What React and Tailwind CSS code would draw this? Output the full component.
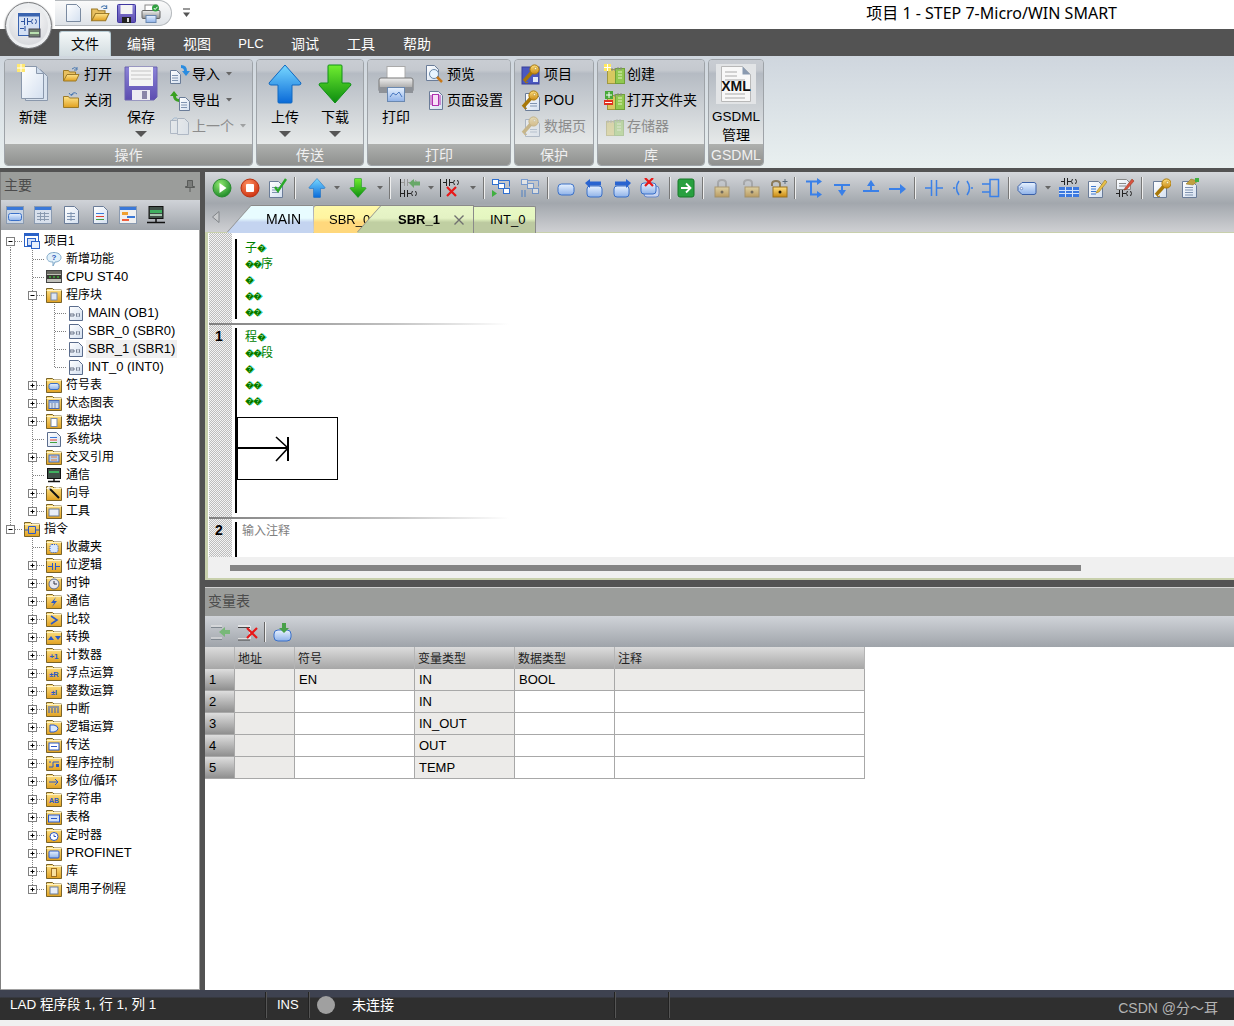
const sans = "font-['Liberation_Sans','Noto_Sans_CJK_SC',sans-serif]";

function S({ w = 20, h = 20, children, className = "" }) {
  return (
    <svg width={w} height={h} viewBox={`0 0 ${w} ${h}`} className={"block shrink-0 " + className}>
      {children}
    </svg>
  );
}

function Defs() {
  const g = (id, a, b, x2 = 0, y2 = 1) => (
    <linearGradient id={id} x1="0" y1="0" x2={x2} y2={y2}>
      <stop offset="0" stopColor={a} />
      <stop offset="1" stopColor={b} />
    </linearGradient>
  );
  return (
    <svg width="0" height="0" className="block h-0 w-0">
      <defs>
        {g("fold", "#ffe48a", "#e0a020")}
        {g("blue", "#78d8ff", "#0a6ad8")}
        {g("green", "#70ee30", "#0c8c10")}
        {g("page", "#ffffff", "#d4e0f0", 1, 1)}
        {g("purple", "#8c84d8", "#5c4cb0")}
        {g("gold", "#ffe080", "#c88810")}
        {g("gray", "#f0f0f0", "#8c8c8c")}
        {g("win", "#ffffff", "#b8cce8")}
        {g("glass", "#e8f2ff", "#8fb2e8")}
        <radialGradient id="rg" cx="0.4" cy="0.3" r="0.8">
          <stop offset="0" stopColor="#90e870" />
          <stop offset="1" stopColor="#108020" />
        </radialGradient>
        <radialGradient id="rr" cx="0.4" cy="0.3" r="0.8">
          <stop offset="0" stopColor="#ff9060" />
          <stop offset="1" stopColor="#c82808" />
        </radialGradient>
      </defs>
    </svg>
  );
}

const Doc = ({ x = 3, y = 1, w = 12, h = 16, c = "#6a7c98" }) => (
  <path d={`M${x + .5} ${y + .5}h${w - 4}l4 4v${h - 4}h-${w}z`} fill="url(#page)" stroke={c} />
);
const Lines = ({ x = 6, y = 7, n = 3, w = 6, c = "#7f93b0" }) => (
  <path d={Array.from({ length: n }, (_, i) => `M${x} ${y + i * 2.5 + .5}h${w}`).join("")} stroke={c} />
);
const Rung = ({ x = 0, y = 0, c = "#222" }) => (
  <g transform={`translate(${x} ${y})`} fill="none" stroke={c}>
    <path d="M0 3.5h3M3.5 0v7M6.5 0v7M7 3.5h3M11.5 1q-2 2.5 0 5M14.5 1q2 2.5 0 5" />
  </g>
);
const RedX = ({ x = 10, y = 9, s = 8 }) => (
  <path d={`M${x} ${y}l${s} ${s}M${x + s} ${y}l-${s} ${s}`} stroke="#e81818" strokeWidth="2.2" />
);
const Key = ({ x = 0, y = 0, sc = 1 }) => (
  <g transform={`translate(${x} ${y}) scale(${sc})`}>
    <path d="M2 17l8-9" stroke="#a87808" strokeWidth="3.5" />
    <path d="M3 17l1 2 2-1" stroke="#a87808" fill="none" />
    <circle cx="12.5" cy="5.5" r="4.6" fill="url(#gold)" stroke="#a87808" />
    <circle cx="13.5" cy="4.5" r="1.2" fill="#fff6d0" stroke="#a87808" strokeWidth=".5" />
  </g>
);
const Book = ({ x = 0, y = 0 }) => (
  <g transform={`translate(${x} ${y})`}>
    <rect x=".5" y="3.5" width="9" height="14" fill="#d8c860" stroke="#a09840" />
    <rect x="8.5" y="2.5" width="9" height="15" fill="#90c850" stroke="#70a038" />
    <path d="M11 6h4M11 9h4M11 12h4" stroke="#e4f2c0" />
    <path d="M2 2v3M5 2v3M8 2v3M11 1v3M14 1v3" stroke="#888" />
  </g>
);
const ArrowUp = ({ w = 34, h = 40 }) => (
  <S w={w} h={h}>
    <svg width={w} height={h} viewBox="0 0 34 40">
      <path d="M17 1L33 19Q33 21 31 21H24V38Q24 39 23 39H11Q10 39 10 38V21H3Q1 21 1 19Z" fill="url(#blue)" stroke="#1068c0" />
    </svg>
  </S>
);
const ArrowDown = ({ w = 34, h = 40 }) => (
  <S w={w} h={h}>
    <svg width={w} height={h} viewBox="0 0 34 40">
      <path d="M17 39L33 21Q33 19 31 19H24V2Q24 1 23 1H11Q10 1 10 2V19H3Q1 19 1 21Z" fill="url(#green)" stroke="#109018" />
    </svg>
  </S>
);
const Printer = ({ w = 36, h = 38 }) => (
  <S w={w} h={h}>
    <svg width={w} height={h} viewBox="0 0 36 38">
      <rect x="9" y="1.5" width="18" height="14" fill="#fff" stroke="#aaa" />
      <rect x="1" y="13" width="34" height="14" rx="2" fill="url(#gray)" stroke="#777" />
      <rect x="1" y="22" width="34" height="6" fill="#8e9298" />
      <rect x="9.5" y="22.5" width="17" height="14" fill="url(#glass)" stroke="#6a88b0" />
      <path d="M12 32l3-4 3 2 3-3 3 5" fill="none" stroke="#4a78c0" />
    </svg>
  </S>
);
const FolderOpen = ({ w = 18, h = 17 }) => (
  <S w={w} h={h}>
    <svg width={w} height={h} viewBox="0 0 18 17">
      <path d="M1.5 15V4.5h5l1 1.5h6v2" fill="#e8c060" stroke="#9c7a28" />
      <path d="M1.5 15L5 8.5h12L14 15z" fill="url(#fold)" stroke="#9c7a28" />
      <path d="M10 3q3-3 5 0" fill="none" stroke="#4a78b0" />
      <path d="M15 1v3h-3" fill="none" stroke="#4a78b0" />
    </svg>
  </S>
);

const I = {
  newBig: (
    <S w={32} h={40}>
      <path d="M8.5 5.5h15l7 7v24h-22z" fill="#d8e2ee" stroke="#8a98ac" />
      <path d="M4.5 2.5h15l7 7v25h-22z" fill="url(#page)" stroke="#8a98ac" />
      <path d="M19.5 2.5v7h7" fill="#cfdcec" stroke="#8a98ac" />
      <rect x="0" y="0" width="8" height="8" fill="#ffe870" />
      <path d="M4 0v8M0 4h8" stroke="#fff" />
    </S>
  ),
  saveBig: (
    <S w={34} h={36}>
      <path d="M1 1h32v30l-3 3H1z" fill="url(#purple)" stroke="#6a62b0" />
      <rect x="5" y="1" width="24" height="19" fill="#f4f4f4" />
      <path d="M7 5h20M7 9h20M7 13h20" stroke="#c4c4c4" />
      <rect x="8" y="24" width="18" height="10" fill="#ececf2" />
      <rect x="18" y="25" width="5" height="8" fill="#8a86a8" />
    </S>
  ),
  open: <FolderOpen />,
  close: (
    <S w={18} h={18}>
      <path d="M1.5 16.5V5.5h5l1 1.5h9v9.5z" fill="url(#fold)" stroke="#9c7a28" />
      <path d="M9 4q3-4 6-1" fill="none" stroke="#4a78b0" />
      <path d="M7 2l2 2.5L11.500 3" fill="none" stroke="#4a78b0" />
    </S>
  ),
  import: (
    <S w={22} h={20}>
      <Doc x={1} y={6} w={10} h={13} />
      <Lines x={3} y={11} n={3} w={6} />
      <path d="M12 1q6 0 6 6h3l-4 5-4-5h2q0-3-3-3z" fill="#2a8ce0" />
    </S>
  ),
  export: (
    <S w={22} h={21}>
      <Doc x={10} y={7} w={10} h={13} />
      <Lines x={12} y={12} n={3} w={6} />
      <path d="M10 12q-6-1-6-6H1l4-5 4 5H7q0 3 3 3z" fill="#38a020" />
    </S>
  ),
  prev: (
    <S w={20} h={20} className="opacity-40">
      <Doc x={1} y={4} w={10} h={13} />
      <Doc x={8} y={2} w={11} h={16} />
      <path d="M3 4q2-3 5-2" fill="none" stroke="#5a8ac0" />
    </S>
  ),
  preview: (
    <S w={19} h={20}>
      <Doc x={1} y={1} w={12} h={15} />
      <circle cx="9" cy="10" r="4.500" fill="#e8f4ff" stroke="#6a88a8" />
      <path d="M12 13l5 5" stroke="#c87818" strokeWidth="2.500" />
    </S>
  ),
  setup: (
    <S w={17} h={19} className="ml-[2px]">
      <path d="M2.500 .5h9l4 4v14h-13z" fill="url(#page)" stroke="#6a7c98" />
      <rect x="5.500" y="3.500" width="6" height="11" fill="#f8e0f8" stroke="#b030b0" />
      <path d="M4 4v10M13 4v10" stroke="#b030b0" />
    </S>
  ),
  keyProject: (
    <S w={20} h={21}>
      <rect x="1" y="3" width="17" height="17" fill="#4a58c0" stroke="#38409a" />
      <rect x="12" y="13" width="5" height="5" fill="#dfe8f8" />
      <Key x={1} y={0} />
    </S>
  ),
  keyPou: (
    <S w={20} h={21}>
      <Doc x={4} y={3} w={14} h={17} />
      <Lines x={9} y={13} n={2} w={7} />
      <Key x={0} y={0} />
    </S>
  ),
  keyData: (
    <S w={20} h={21} className="opacity-40">
      <Doc x={4} y={3} w={14} h={17} />
      <Lines x={9} y={13} n={2} w={7} />
      <Key x={0} y={0} />
    </S>
  ),
  libNew: (
    <S w={21} h={20}>
      <Book x={3} y={2} />
      <rect x="0" y="0" width="7" height="7" fill="#ffe860" />
      <path d="M3.500 0v7M0 3.500h7" stroke="#fff" />
    </S>
  ),
  libOpen: (
    <S w={21} h={20}>
      <Book x={3} y={2} />
      <rect x="1" y="1" width="8" height="8" fill="#48a838" />
      <path d="M5 2v6M2 5h6" stroke="#fff" />
      <rect x="0" y="10" width="9" height="5" fill="#e03020" />
      <rect x="1" y="12" width="7" height="1" fill="#fff" />
    </S>
  ),
  libMem: (
    <S w={21} h={20} className="ml-[2px] opacity-40">
      <Book x={0} y={2} />
    </S>
  ),
  xml: (
    <S w={40} h={40}>
      <rect x="0" y="0" width="40" height="40" fill="#e2e4e6" />
      <path d="M5.500 2.500h21l8 8v27h-29z" fill="#f8f8f8" stroke="#b8b8b8" />
      <path d="M26.500 2.500v8h8z" fill="#8a9ab0" />
      <path d="M9 8h12M9 12h12M9 16h20M9 30h20M9 34h20" stroke="#c4c4c4" strokeWidth="1.500" />
      <text x="20" y="27" textAnchor="middle" fontFamily="Liberation Sans" fontWeight="700" fontSize="14" fill="#111">XML</text>
    </S>
  ),

  // toolbar
  play: (
    <S><circle cx="10" cy="10" r="9" fill="url(#rg)" stroke="#2a8a30" /><path d="M7.500 5l7 5-7 5z" fill="#fff" /></S>
  ),
  stop: (
    <S><circle cx="10" cy="10" r="9" fill="url(#rr)" stroke="#b83010" /><rect x="6" y="6" width="8" height="8" rx="1" fill="#fff" /></S>
  ),
  check: (
    <S w={20} h={20}>
      <Doc x={1} y={3} w={13} h={16} />
      <Lines x={4} y={9} n={3} w={7} />
      <path d="M7 9l3 4 8-12" fill="none" stroke="#28a828" strokeWidth="2.400" />
    </S>
  ),
  up: <ArrowUp w={18} h={20} />,
  down: <ArrowDown w={18} h={20} />,
  ladUp: (
    <S w={22} h={20}>
      <path d="M1.500 1v18" stroke="#222" />
      <Rung x={2} y={12} />
      <Rung x={2} y={1} c="#999" />
      <path d="M10 5l5-4v2.500h6v4h-6V10z" fill="#68a868" />
    </S>
  ),
  ladX: (
    <S w={22} h={20}>
      <path d="M1.500 1v18" stroke="#222" />
      <Rung x={4} y={1} />
      <RedX x={8} y={9} s={9} />
    </S>
  ),
  blocks: (
    <S w={20} h={20}>
      <path d="M1 12v7l5-3.500z" fill="#40b040" />
      <rect x="1.500" y="1.500" width="6" height="5" fill="#fff" stroke="#3070d0" />
      <rect x="7.500" y="5.500" width="6" height="5" fill="#fff" stroke="#3070d0" />
      <rect x="12.500" y="10.500" width="6" height="5" fill="#fff" stroke="#3070d0" />
      <path d="M8 2.500h10.500v6" fill="none" stroke="#3070d0" />
    </S>
  ),
  blocks2: (
    <S w={20} h={20} className="opacity-50">
      <rect x="1" y="12" width="2" height="7" fill="#5080c0" />
      <rect x="4" y="12" width="2" height="7" fill="#5080c0" />
      <rect x="1.500" y="1.500" width="6" height="5" fill="#fff" stroke="#3070d0" />
      <rect x="7.500" y="5.500" width="6" height="5" fill="#fff" stroke="#3070d0" />
      <rect x="12.500" y="10.500" width="6" height="5" fill="#fff" stroke="#3070d0" />
      <path d="M8 2.500h10.500v6" fill="none" stroke="#3070d0" />
    </S>
  ),
  tag: (
    <S w={20} h={20}><rect x="2" y="6" width="16" height="11" rx="3.500" fill="url(#glass)" stroke="#3a70c8" /></S>
  ),
  tagLeft: (
    <S w={20} h={20}>
      <rect x="3" y="8" width="15" height="11" rx="3" fill="url(#glass)" stroke="#3a70c8" />
      <path d="M1 5l5-4v2.500h11v4H6V10z" fill="#2a64d0" />
    </S>
  ),
  tagRight: (
    <S w={20} h={20}>
      <rect x="2" y="8" width="15" height="11" rx="3" fill="url(#glass)" stroke="#3a70c8" />
      <path d="M19 5l-5-4v2.500H3v4h11V10z" fill="#2a64d0" />
    </S>
  ),
  tagX: (
    <S w={20} h={20}>
      <rect x="4" y="8" width="15" height="11" rx="3" fill="#c8d4f0" stroke="#6a8ac8" />
      <rect x="1" y="5" width="15" height="11" rx="3" fill="url(#glass)" stroke="#3a70c8" />
      <RedX x={5} y={0} s={8} />
    </S>
  ),
  goto: (
    <S w={18} h={20}>
      <rect x="1" y="1" width="16" height="18" rx="2" fill="#28a040" stroke="#187828" />
      <path d="M4 10h9M9 5.500l4.500 4.500L9 14.500" fill="none" stroke="#fff" strokeWidth="1.800" />
    </S>
  ),
  lockA: (
    <S w={16} h={20} className="opacity-50">
      <path d="M4 9V5q0-3 4-3t4 3v4" fill="none" stroke="#8a8a8a" strokeWidth="2" />
      <rect x="1" y="9" width="14" height="10" fill="url(#gold)" stroke="#987020" />
      <circle cx="8" cy="14" r="1.500" fill="#332200" />
    </S>
  ),
  lockB: (
    <S w={18} h={20} className="opacity-50">
      <path d="M2 7V5q0-3 4-3t4 3v4" fill="none" stroke="#8a8a8a" strokeWidth="2" />
      <rect x="3" y="9" width="14" height="10" fill="url(#gold)" stroke="#987020" />
      <circle cx="10" cy="14" r="1.500" fill="#332200" />
    </S>
  ),
  lockC: (
    <S w={20} h={20}>
      <path d="M3 8V6q0-3 4-3t4 3v3" fill="none" stroke="#8a7a5a" strokeWidth="2" />
      <rect x="4" y="9" width="14" height="10" fill="url(#gold)" stroke="#987020" />
      <circle cx="11" cy="14" r="1.500" fill="#221800" />
      <path d="M16 1v5M13.500 3.500h5" stroke="#5a6a7a" />
    </S>
  ),
  branch: (
    <S w={18} h={20}>
      <path d="M1 3.500h5v13h6M6 3.500h6" fill="none" stroke="#3a80e8" strokeWidth="2" />
      <path d="M12 0l5 3.500-5 3.500zM12 13l5 3.500-5 3.500z" fill="#3a80e8" />
    </S>
  ),
  lineDown: (
    <S w={18} h={20}>
      <path d="M0 7h16M8 7v6" stroke="#3a80e8" strokeWidth="2" />
      <path d="M4 12h8l-4 6z" fill="#3a80e8" />
    </S>
  ),
  lineUp: (
    <S w={18} h={20}>
      <path d="M1 13h16M9 13V7" stroke="#3a80e8" strokeWidth="2" />
      <path d="M5 8h8L9 2z" fill="#3a80e8" />
    </S>
  ),
  lineRight: (
    <S w={18} h={20}>
      <path d="M1 11h12" stroke="#3a80e8" strokeWidth="2" />
      <path d="M12 6l6 5-6 5z" fill="#3a80e8" />
    </S>
  ),
  contact: (
    <S w={20} h={20}><path d="M1 10h6M7.500 2v16M12.500 2v16M13 10h6" fill="none" stroke="#3a80e8" strokeWidth="1.500" /></S>
  ),
  coil: (
    <S w={20} h={20}><path d="M0 10h2M6 3q-5 7 0 14M14 3q5 7 0 14M18 10h2" fill="none" stroke="#3a80e8" strokeWidth="1.500" /></S>
  ),
  boxI: (
    <S w={18} h={20}><path d="M0 6h8M0 14h8M8 1.500h8.500v17H8z" fill="none" stroke="#3a80e8" strokeWidth="1.500" /></S>
  ),
  tagBig: (
    <S w={20} h={20}>
      <path d="M5 4.500h12a2 2 0 0 1 2 2v8a2 2 0 0 1-2 2H5L1 12.500v-4z" fill="url(#glass)" stroke="#3a60a8" />
      <circle cx="4.500" cy="10.500" r="1.200" fill="#fff" stroke="#3a60a8" strokeWidth=".6" />
    </S>
  ),
  ladTable: (
    <S w={22} h={20}>
      <Rung x={3} y={0} />
      <rect x="1" y="9" width="20" height="10" fill="#3a78e0" />
      <path d="M1 12.500h20M1 15.500h20M7.500 9v10M14.500 9v10" stroke="#d4e4fa" />
    </S>
  ),
  docPen: (
    <S w={20} h={20}>
      <Doc x={1} y={3} w={14} h={16} />
      <Lines x={4} y={8} n={4} w={5} c="#3a78d0" />
      <path d="M10 13l8-11 2 2-8 10-3 1z" fill="#e8c048" stroke="#9a7820" strokeWidth=".6" />
    </S>
  ),
  ladPen: (
    <S w={20} h={20}>
      <Doc x={1} y={1} w={14} h={10} c="#888" />
      <Lines x={4} y={5} n={2} w={7} c="#888" />
      <Rung x={1} y={12} />
      <path d="M10 10l7-9 2 2-7 8-3 1z" fill="#d85040" stroke="#9a4020" strokeWidth=".6" />
    </S>
  ),
  keyDoc: (
    <S w={20} h={20}>
      <Doc x={2} y={3} w={13} h={16} />
      <Key x={3} y={0} />
    </S>
  ),
  notes: (
    <S w={20} h={20}>
      <Doc x={2} y={3} w={14} h={16} />
      <Lines x={5} y={9} n={4} w={8} />
      <path d="M6 6l5-5 7 2-5 4z" fill="#c0a040" stroke="#8a7020" strokeWidth=".5" />
      <rect x="15" y="0" width="4" height="4" fill="#40b040" />
    </S>
  ),

  // side panel toolbar
  winTag: (
    <S w={18} h={18}>
      <rect x=".5" y=".5" width="17" height="17" fill="#c8d4e4" stroke="#8a9ab0" />
      <rect x="1" y="1" width="16" height="3" fill="#3a78d8" />
      <rect x="2.500" y="7.500" width="13" height="7" rx="2" fill="url(#glass)" stroke="#3a70c8" />
    </S>
  ),
  winGrid: (
    <S w={18} h={18}>
      <rect x=".5" y=".5" width="17" height="17" fill="#d8e0ec" stroke="#8a9ab0" />
      <rect x="1" y="1" width="16" height="3" fill="#3a78d8" />
      <path d="M3 7.500h12M3 10.500h12M3 13.500h12M6.500 6v9M10.500 6v9" stroke="#8a9ab0" />
    </S>
  ),
  docGrid: (
    <S w={15} h={18}>
      <Doc x={0} y={0} w={14} h={17} />
      <path d="M3 7.500h8M3 10.500h8M3 13.500h8M7 6v9" stroke="#7f93b0" />
    </S>
  ),
  docColor: (
    <S w={15} h={18}>
      <Doc x={0} y={0} w={14} h={17} />
      <path d="M3 7.500h8" stroke="#3a78d8" />
      <path d="M3 10.500h8" stroke="#e04030" />
      <path d="M3 13.500h8" stroke="#40a040" />
    </S>
  ),
  winColor: (
    <S w={18} h={18}>
      <rect x=".5" y=".5" width="17" height="17" fill="#f0f0f0" stroke="#8a9ab0" />
      <rect x="1" y="1" width="16" height="3" fill="#3a78d8" />
      <rect x="3" y="6" width="6" height="3" fill="#f0a030" />
      <rect x="8" y="10" width="8" height="2" fill="#3a78d8" />
      <rect x="3" y="13" width="7" height="2" fill="#f06040" />
    </S>
  ),
  monitor: (
    <S w={20} h={18}>
      <rect x="3" y=".5" width="14" height="12" fill="#405048" stroke="#111" />
      <rect x="4" y="4" width="12" height="3" fill="#40b060" />
      <rect x="4" y="8" width="12" height="2" fill="#a8c8b0" />
      <path d="M10 13v3M1 16.500h18" stroke="#111" strokeWidth="1.500" />
    </S>
  ),
};

// tree folder with a small picture on its front
function Fold({ children }) {
  return (
    <S w={16} h={16}>
      <path d="M.5 15.500V1.500h6l1.500 1.500h7.500v12.500z" fill="url(#fold)" stroke="#7a6428" />
      <path d="M.5 3.500h15" stroke="#fff4c8" />
      {children}
    </S>
  );
}
const T = ({ c = "#2a58c8", s = 8, y = 12, x = 8, children }) => (
  <text x={x} y={y} textAnchor="middle" fontFamily="Liberation Sans" fontWeight="700" fontSize={s} fill={c}>{children}</text>
);
const Tr = {
  project: (
    <S w={17} h={16}>
      <rect x=".5" y=".5" width="14" height="13" fill="#fff" stroke="#2a62c8" />
      <rect x="1" y="1" width="13" height="2" fill="#2a62c8" />
      <rect x="3.500" y="5.500" width="8" height="7" fill="#d4e2fa" stroke="#2a62c8" />
      <rect x="7.500" y="8.500" width="8" height="7" fill="#e8f0fc" stroke="#2a62c8" />
    </S>
  ),
  bubble: (
    <S w={16} h={16}>
      <path d="M8 1.500c4 0 7 2 7 5s-3 4.500-6 4.500L7 15v-4C3 11 1 9.500 1 6.500s3-5 7-5z" fill="#e0f0fa" stroke="#80a8c8" />
      <T c="#2a50b8" s={8} y={9}>?</T>
    </S>
  ),
  plc: (
    <S w={16} h={14}>
      <rect x=".5" y=".5" width="15" height="12" fill="#c0c0b8" stroke="#444" />
      <rect x="1" y="1" width="14" height="3" fill="#6a6a62" />
      <rect x="1" y="5" width="14" height="4" fill="#3a3a34" />
      <path d="M3 7h2M7 7h2M11 7h2" stroke="#40e040" />
    </S>
  ),
  block: <Fold><rect x="5" y="6" width="6" height="7" fill="#dde6f4" stroke="#7a8aa8" /></Fold>,
  ladder: (
    <S w={14} h={15}>
      <path d="M.5 .5h9l4 4v10H.5z" fill="url(#page)" stroke="#5a6c8c" />
      <path d="M2 7v4M4 7v4M1 9h1M4 9h2M8 7q-1 2 0 4M10 7q1 2 0 4" fill="none" stroke="#6a7488" />
    </S>
  ),
  sym: <Fold><rect x="3" y="6.500" width="10" height="6" rx="2" fill="url(#glass)" stroke="#3a70c8" /></Fold>,
  status: <Fold><rect x="3" y="5.500" width="10" height="8" fill="#d4dff0" stroke="#4a6ab0" /><path d="M3.500 7h9" stroke="#3a70c8" /><path d="M6 8v5M9 8v5" stroke="#7a8aa8" /></Fold>,
  data: <Fold><rect x="5" y="5.500" width="6" height="8" fill="#fff" stroke="#7a8aa8" /></Fold>,
  sys: (
    <S w={14} h={15}>
      <path d="M.5 .5h9l4 4v10H.5z" fill="url(#page)" stroke="#5a6c8c" />
      <path d="M3 5.500h7" stroke="#3a78d8" /><path d="M3 8h7" stroke="#e04030" /><path d="M3 10.500h7" stroke="#40a040" />
    </S>
  ),
  cross: <Fold><rect x="3" y="6" width="10" height="7" fill="#b8d0f0" stroke="#4a6ab0" /><path d="M5 8h6M5 11h6" stroke="#e08040" /></Fold>,
  comm: (
    <S w={16} h={15}>
      <rect x="1.500" y=".5" width="13" height="10" fill="#405048" stroke="#111" />
      <rect x="3" y="3" width="10" height="2" fill="#40b060" />
      <path d="M8 11v2M2 13.500h12" stroke="#111" strokeWidth="1.500" />
    </S>
  ),
  wizard: <Fold><path d="M3 3l10 10" stroke="#111" strokeWidth="2" /><path d="M3 1v4M1 3h4M10 3h3" stroke="#fff" /></Fold>,
  tools: <Fold><rect x="3" y="6" width="10" height="7" fill="#e8eef8" stroke="#6a7c98" /></Fold>,
  instr: <Fold><path d="M1 9h3M12 9h3M4.500 5.500h7v7h-7z" fill="none" stroke="#2a58c8" /></Fold>,
  star: <Fold><rect x="4" y="5.500" width="8" height="8" rx="2" fill="#d8e8ff" stroke="#2a58c8" strokeDasharray="1 1" /></Fold>,
  bit: <Fold><path d="M2 9.500h4M6.500 6v7M9.500 6v7M10 9.500h4" stroke="#2a58c8" /></Fold>,
  clock: <Fold><circle cx="8" cy="9" r="5" fill="#e8e8f0" stroke="#5a6a90" /><path d="M8 6v3h3" stroke="#334" fill="none" /></Fold>,
  bolt: <Fold><path d="M10 4L5 10h3l-2 4 5-6H8z" fill="#2a58c8" /></Fold>,
  compare: <Fold><path d="M5 5l6 4-6 4" fill="none" stroke="#2a58c8" strokeWidth="1.600" /></Fold>,
  convert: <Fold><path d="M2 11l3-4 3 4zM9 7h6l-3 4z" fill="#2a58c8" /></Fold>,
  counter: <Fold><T>+1</T></Fold>,
  floatOp: <Fold><T s={7.500}>±R</T></Fold>,
  intOp: <Fold><T s={7.500}>±I</T></Fold>,
  interrupt: <Fold><path d="M3 12V7M6 12V7M9 12V7M12 12V7M2 6h11" stroke="#2a58c8" /></Fold>,
  logic: <Fold><path d="M4 6h4q4 1 4 3.500T8 13H4z" fill="#d8e8ff" stroke="#2a58c8" /></Fold>,
  move: <Fold><rect x="3" y="6" width="10" height="7" fill="#fff" stroke="#2a58c8" /><path d="M5 9.500h6" stroke="#2a58c8" /></Fold>,
  flow: <Fold><path d="M3 12h4V7h6M3 7h2" fill="none" stroke="#2a58c8" /><rect x="10" y="9" width="3" height="3" fill="#2a58c8" /></Fold>,
  shift: <Fold><path d="M3 9h8M9 6l3 3-3 3" fill="none" stroke="#2a58c8" /></Fold>,
  str: <Fold><T s={7} y={12}>AB</T></Fold>,
  table: <Fold><rect x="2.500" y="6" width="11" height="7" fill="#cfe0fa" stroke="#2a58c8" /><path d="M5 9.500h6" stroke="#2a58c8" /></Fold>,
  timer: <Fold><circle cx="8" cy="9.500" r="4" fill="#fff" stroke="#2a58c8" /><path d="M8 7.500v2h2" fill="none" stroke="#2a58c8" /></Fold>,
  net: <Fold><rect x="3" y="6" width="10" height="7" rx="1" fill="url(#glass)" stroke="#2a58c8" /></Fold>,
  lib: <Fold><rect x="5.500" y="5.500" width="5" height="8" fill="#f8e0a0" stroke="#a07020" /></Fold>,
  call: <Fold><rect x="4" y="6" width="8" height="7" fill="#e8eef8" stroke="#6a7c98" /></Fold>,
};

// 22px wide strip: tree guide, elbow and optional expand box
function Cell({ kind, box }) {
  const dots = { stroke: "#808080", strokeDasharray: "1 1", fill: "none" };
  return (
    <S w={22} h={18}>
      {kind === "line" || kind === "mid" ? <path d="M9.500 0v18" {...dots} /> : null}
      {kind === "last" ? <path d="M9.500 0v9" {...dots} /> : null}
      {kind === "root" ? <path d="M9.500 9v9" {...dots} /> : null}
      {kind !== "line" && kind !== "none" ? <path d="M10 9.500h12" {...dots} /> : null}
      {box ? (
        <g>
          <rect x="5.500" y="5.500" width="8" height="8" fill="#fff" stroke="#808080" />
          <path d="M7.500 9.500h4" stroke="#000" />
          {box === "+" ? <path d="M9.500 7.500v4" stroke="#000" /> : null}
        </g>
      ) : null}
    </S>
  );
}

const tree = [
  { t: "项目1", ic: "project", g: ["root"], box: "-" },
  { t: "新增功能", ic: "bubble", g: ["line", "mid"] },
  { t: "CPU ST40", ic: "plc", g: ["line", "mid"] },
  { t: "程序块", ic: "block", g: ["line", "mid"], box: "-" },
  { t: "MAIN (OB1)", ic: "ladder", g: ["line", "line", "mid"] },
  { t: "SBR_0 (SBR0)", ic: "ladder", g: ["line", "line", "mid"] },
  { t: "SBR_1 (SBR1)", ic: "ladder", g: ["line", "line", "mid"], sel: true },
  { t: "INT_0 (INT0)", ic: "ladder", g: ["line", "line", "last"] },
  { t: "符号表", ic: "sym", g: ["line", "mid"], box: "+" },
  { t: "状态图表", ic: "status", g: ["line", "mid"], box: "+" },
  { t: "数据块", ic: "data", g: ["line", "mid"], box: "+" },
  { t: "系统块", ic: "sys", g: ["line", "mid"] },
  { t: "交叉引用", ic: "cross", g: ["line", "mid"], box: "+" },
  { t: "通信", ic: "comm", g: ["line", "mid"] },
  { t: "向导", ic: "wizard", g: ["line", "mid"], box: "+" },
  { t: "工具", ic: "tools", g: ["line", "last"], box: "+" },
  { t: "指令", ic: "instr", g: ["last"], box: "-" },
  { t: "收藏夹", ic: "star", g: ["none", "mid"] },
  { t: "位逻辑", ic: "bit", g: ["none", "mid"], box: "+" },
  { t: "时钟", ic: "clock", g: ["none", "mid"], box: "+" },
  { t: "通信", ic: "bolt", g: ["none", "mid"], box: "+" },
  { t: "比较", ic: "compare", g: ["none", "mid"], box: "+" },
  { t: "转换", ic: "convert", g: ["none", "mid"], box: "+" },
  { t: "计数器", ic: "counter", g: ["none", "mid"], box: "+" },
  { t: "浮点运算", ic: "floatOp", g: ["none", "mid"], box: "+" },
  { t: "整数运算", ic: "intOp", g: ["none", "mid"], box: "+" },
  { t: "中断", ic: "interrupt", g: ["none", "mid"], box: "+" },
  { t: "逻辑运算", ic: "logic", g: ["none", "mid"], box: "+" },
  { t: "传送", ic: "move", g: ["none", "mid"], box: "+" },
  { t: "程序控制", ic: "flow", g: ["none", "mid"], box: "+" },
  { t: "移位/循环", ic: "shift", g: ["none", "mid"], box: "+" },
  { t: "字符串", ic: "str", g: ["none", "mid"], box: "+" },
  { t: "表格", ic: "table", g: ["none", "mid"], box: "+" },
  { t: "定时器", ic: "timer", g: ["none", "mid"], box: "+" },
  { t: "PROFINET", ic: "net", g: ["none", "mid"], box: "+" },
  { t: "库", ic: "lib", g: ["none", "mid"], box: "+" },
  { t: "调用子例程", ic: "call", g: ["none", "last"], box: "+" },
];

function TreeRow({ row }) {
  const latin = /^[\x00-\x7f]+$/.test(row.t);
  return (
    <div className="flex h-[18px] items-center">
      {row.g.map((k, i) => (
        <Cell key={i} kind={k} box={i === row.g.length - 1 ? row.box : null} />
      ))}
      <div className="ml-[1px] flex h-[18px] w-[16px] shrink-0 items-center justify-center">{Tr[row.ic]}</div>
      <span className={"ml-[2px] whitespace-nowrap px-[2px] leading-[18px] text-black " + (latin ? "text-[13px] " : "text-[12px] ") + (row.sel ? "bg-[#f0f0f0] pr-[2px]" : "")}>
        {row.t}
      </span>
    </div>
  );
}

function Caret({ className = "" }) {
  return (
    <S w={6} h={4} className={className}>
      <path d="M0 0h6L3 3.500z" fill="#666" />
    </S>
  );
}

function LargeBtn({ icon, label, caret, w }) {
  return (
    <div className={"flex shrink-0 flex-col items-center " + w}>
      <div className="flex h-[48px] items-center justify-center">{icon}</div>
      <div className="h-[18px] text-[14px] leading-[18px] text-black">{label}</div>
      {caret ? (
        <S w={12} h={6} className="mt-[5px]">
          <path d="M0 0h12L6 6z" fill="#555" />
        </S>
      ) : null}
    </div>
  );
}

function SmallBtn({ icon, label, caret, off, iw = "w-[23px]" }) {
  return (
    <div className="flex h-[26px] items-center">
      <div className={"flex justify-start pl-[1px] " + iw}>{icon}</div>
      <span className={"whitespace-nowrap text-[14px] leading-[18px] " + (off ? "text-[#8c8c8c]" : "text-black")}>{label}</span>
      {caret ? <Caret className={"ml-[6px] " + (off ? "opacity-50" : "")} /> : null}
    </div>
  );
}

function Group({ label, w, children }) {
  return (
    <div className={"flex h-[107px] shrink-0 flex-col overflow-hidden rounded-[4px] border border-[#9ea3a8] " + w}>
      <div className="flex h-[84px] bg-[linear-gradient(#c9cdd3_0,#c5c9cf_12%,#b5bbc3_16%,#e6e9e9_100%)]">{children}</div>
      <div className="flex h-[21px] items-center justify-center bg-[linear-gradient(#aeb0ae,#8f918f)] text-[14px] leading-none text-[#f0f0f0]">
        {label}
      </div>
    </div>
  );
}

function Ribbon() {
  return (
    <div className="flex h-[112px] gap-[3px] bg-[linear-gradient(#cfd6de,#e9f0f0)] pl-[4px] pt-[3px]">
      <Group label="操作" w="w-[249px]">
        <LargeBtn icon={I.newBig} label="新建" w="w-[56px]" />
        <div className="flex w-[57px] shrink-0 flex-col pt-[1px]">
          <SmallBtn icon={I.open} label="打开" />
          <SmallBtn icon={I.close} label="关闭" />
        </div>
        <LargeBtn icon={I.saveBig} label="保存" caret w="w-[46px]" />
        <div className="ml-[4px] flex flex-col pt-[1px]">
          <SmallBtn icon={I.import} label="导入" caret iw="w-[24px]" />
          <SmallBtn icon={I.export} label="导出" caret iw="w-[24px]" />
          <SmallBtn icon={I.prev} label="上一个" caret off iw="w-[24px]" />
        </div>
      </Group>
      <Group label="传送" w="w-[108px]">
        <div className="flex pl-[3px]">
          <LargeBtn icon={<ArrowUp />} label="上传" caret w="w-[50px]" />
          <LargeBtn icon={<ArrowDown />} label="下载" caret w="w-[50px]" />
        </div>
      </Group>
      <Group label="打印" w="w-[144px]">
        <LargeBtn icon={<Printer />} label="打印" w="w-[56px]" />
        <div className="flex flex-col pt-[1px]">
          <SmallBtn icon={I.preview} label="预览" />
          <SmallBtn icon={I.setup} label="页面设置" />
        </div>
      </Group>
      <Group label="保护" w="w-[80px]">
        <div className="flex flex-col pl-[5px] pt-[1px]">
          <SmallBtn icon={I.keyProject} label="项目" iw="w-[24px]" />
          <SmallBtn icon={I.keyPou} label="POU" iw="w-[24px]" />
          <SmallBtn icon={I.keyData} label="数据页" off iw="w-[24px]" />
        </div>
      </Group>
      <Group label="库" w="w-[108px]">
        <div className="flex flex-col pl-[5px] pt-[1px]">
          <SmallBtn icon={I.libNew} label="创建" iw="w-[24px]" />
          <SmallBtn icon={I.libOpen} label="打开文件夹" iw="w-[24px]" />
          <SmallBtn icon={I.libMem} label="存储器" off iw="w-[24px]" />
        </div>
      </Group>
      <Group label="GSDML" w="w-[56px]">
        <div className="flex w-full flex-col items-center pt-[4px]">
          <div className="flex h-[40px] items-center">{I.xml}</div>
          <div className="mt-[3px] h-[19px] text-[13.5px] leading-[19px] text-black">GSDML</div>
          <div className="h-[19px] text-[14px] leading-[19px] text-black">管理</div>
        </div>
      </Group>
    </div>
  );
}

const Sep = ({ c = "" }) => (
  <div className={"flex h-[28px] w-[6px] shrink-0 justify-center " + c}>
    <div className="my-[3px] w-[2px] border-l border-r border-l-[#777] border-r-[#eee]" />
  </div>
);
const Tool = ({ n, c = "" }) => <div className={"flex h-[28px] w-[28px] shrink-0 items-center justify-center " + c}>{I[n]}</div>;
const TCaret = ({ c = "" }) => (
  <div className={"flex h-[28px] w-[10px] shrink-0 items-center justify-center " + c}>
    <Caret />
  </div>
);

function EditorToolbar() {
  return (
    <div className="flex h-[33px] items-center pb-[1px] pl-[3px]">
      <Tool n="play" />
      <Tool n="stop" />
      <Tool n="check" />
      <Sep />
      <Tool n="up" c="ml-[5px]" />
      <TCaret c="ml-[1px]" />
      <Tool n="down" c="ml-[2px]" />
      <TCaret c="ml-[3px]" />
      <Sep c="ml-[2px]" />
      <Tool n="ladUp" c="ml-[3px]" />
      <TCaret c="ml-[2px]" />
      <Tool n="ladX" />
      <TCaret c="ml-[4px]" />
      <Sep c="ml-[3px]" />
      <Tool n="blocks" />
      <Tool n="blocks2" c="ml-[1px]" />
      <Sep c="ml-[1px]" />
      <Tool n="tag" c="ml-[1px]" />
      <Tool n="tagLeft" />
      <Tool n="tagRight" />
      <Tool n="tagX" />
      <Sep c="ml-[3px]" />
      <Tool n="goto" c="-ml-[1px]" />
      <Sep />
      <Tool n="lockA" c="ml-[2px]" />
      <Tool n="lockB" c="ml-[1px]" />
      <Tool n="lockC" />
      <Sep c="-ml-[1px]" />
      <Tool n="branch" c="ml-[2px]" />
      <Tool n="lineDown" c="ml-[1px]" />
      <Tool n="lineUp" />
      <Tool n="lineRight" c="-ml-[2px]" />
      <Sep c="ml-[1px]" />
      <Tool n="contact" c="ml-[2px]" />
      <Tool n="coil" c="ml-[1px]" />
      <Tool n="boxI" />
      <Sep c="ml-[1px]" />
      <Tool n="tagBig" c="ml-[1px]" />
      <TCaret c="ml-[2px]" />
      <Tool n="ladTable" c="ml-[2px]" />
      <Tool n="docPen" />
      <Tool n="ladPen" />
      <Sep />
      <Tool n="keyDoc" c="ml-[2px]" />
      <Tool n="notes" c="ml-[1px]" />
    </div>
  );
}

function EditorTabs() {
  return (
    <div className="flex h-[28px] items-end pl-[7px]">
      <S w={8} h={12} className="mb-[10px] mr-[7px]">
        <path d="M7 .5v11L.5 6z" fill="#c8cacc" stroke="#808488" />
      </S>
      <div className="w-[86px] [filter:drop-shadow(0_-1px_0_#8a8a8a)]">
        <div className="flex h-[27px] items-center justify-end bg-[linear-gradient(#e8fcff_0,#e8fcff_45%,#c4d4f0_60%,#c4d4f0_100%)] pr-[12px] text-[14px] text-black [clip-path:polygon(0_100%,24px_0,100%_0,100%_100%)]">
          MAIN
        </div>
      </div>
      <div className="ml-[1px] flex h-[27px] w-[67px] items-center rounded-tl-[2px] bg-[linear-gradient(#fff9a8_0,#fff4a0_45%,#ffd87c_60%,#ffd87c_100%)] pl-[15px] text-[13px] text-black [filter:drop-shadow(0_-1px_0_#8a8a8a)]">
        <span className="whitespace-nowrap">SBR_0</span>
      </div>
      <div className="z-10 -ml-[24px] w-[116px] [filter:drop-shadow(0_-1px_0_#8a8a8a)_drop-shadow(1px_0_0_#8a8a8a)]">
        <div className="flex h-[27px] items-center bg-[linear-gradient(#e8f6c8_0,#e4f2c4_45%,#c0cfa2_60%,#c0cfa2_100%)] pl-[41px] text-[13px] font-bold text-black [clip-path:polygon(0_100%,24px_0,100%_0,100%_100%)]">
          SBR_1
          <S w={10} h={10} className="ml-[14px]">
            <path d="M.5 .5l9 9M9.500 .5l-9 9" stroke="#707070" strokeWidth="1.400" />
          </S>
        </div>
      </div>
      <div className="ml-[1px] flex h-[27px] w-[62px] items-center rounded-tr-[2px] border-r border-t border-[#8a8a8a] bg-[linear-gradient(#e8f9c4_0,#e4f6c0_45%,#bcc9a0_60%,#bcc9a0_100%)] pl-[16px] text-[13px] text-black">
        INT_0
      </div>
    </div>
  );
}

// the comment text is mojibake in the original, hence the replacement characters
const Bad = () => (
  <span className="w-[8px] text-center text-[9px] leading-none text-[#007800] [text-shadow:-0.5px_0_#e0d800,0.5px_0_#00d8e0]">
    {"\uFFFD"}
  </span>
);
const Lg = ({ children }) => <div className="flex h-[16px] items-center text-[12px] leading-[16px] text-[#008000]">{children}</div>;

function Comment({ a, b }) {
  return (
    <div className="pl-[8px]">
      <Lg>{a}<Bad /></Lg>
      <Lg><Bad /><Bad />{b}</Lg>
      <Lg><Bad /></Lg>
      <Lg><Bad /><Bad /></Lg>
      <Lg><Bad /><Bad /></Lg>
    </div>
  );
}

const gutter = "ml-[1px] w-[23px] shrink-0 bg-[repeating-conic-gradient(#bdbdbd_0_25%,#f4f4f4_0_50%)] bg-[length:2px_2px]";

function Network({ num, top, bottom, h, children }) {
  return (
    <div className={"flex " + h}>
      <div className={gutter + " flex justify-center pr-[3px] pt-[3px] text-[14px] font-bold leading-[16px] text-black"}>
        {num}
      </div>
      <div className="w-[3px] shrink-0" />
      <div className={"flex-1 border-l-2 border-black " + top + " " + bottom}>{children}</div>
    </div>
  );
}

const NetSep = () => <div className="ml-[1px] h-[2px] w-[300px] bg-[linear-gradient(90deg,#808080,#c0c0c0_60%,#fff)]" />;

function Editor() {
  return (
    <div className="flex h-[347px] flex-col border-b-2 border-l-[3px] border-[#c8d0ac] bg-white">
      <div className="flex h-[90px] shrink-0">
        <div className={gutter} />
        <div className="w-[3px]" />
        <div className="mb-[4px] mt-[6px] flex-1 border-l-2 border-black pt-[1px]">
          <Comment a="子" b="序" />
        </div>
      </div>
      <NetSep />
      <Network num="1" h="h-[192px]" top="mt-[3px]" bottom="mb-[4px]">
        <div className="pt-[1px]">
          <Comment a="程" b="段" />
        </div>
        <div className="mt-[8px] h-[63px] w-[101px] border border-black">
          <S w={99} h={61}>
            <path d="M0 30h50" stroke="#000" strokeWidth="2" />
            <path d="M50 19v24" stroke="#000" strokeWidth="2" />
            <path d="M38 19l12 11L38 43" fill="none" stroke="#000" strokeWidth="1.600" />
          </S>
        </div>
      </Network>
      <NetSep />
      <Network num="2" h="h-[38px]" top="mt-[3px]" bottom="">
        <div className="pl-[5px] pt-[1px] text-[12px] leading-[16px] text-[#808080]">输入注释</div>
      </Network>
      <div className="flex h-[21px] items-start bg-[#f0f0f0] pt-[8px]">
        <div className="ml-[22px] h-[6px] w-[851px] bg-[#848484]" />
      </div>
    </div>
  );
}

const cols = ["w-[30px]", "w-[60px]", "w-[120px]", "w-[100px]", "w-[100px]", "w-[250px]"];
const rows = [
  ["1", "", "EN", "IN", "BOOL", ""],
  ["2", "", "", "IN", "", ""],
  ["3", "", "", "IN_OUT", "", ""],
  ["4", "", "", "OUT", "", ""],
  ["5", "", "", "TEMP", "", ""],
];

function VarTable() {
  return (
    <div className="w-[660px]">
      <div className="flex h-[22px]">
        {["", "地址", "符号", "变量类型", "数据类型", "注释"].map((h, i) => (
          <div key={i} className={"flex items-center border-r border-[#b4b4b4] bg-[linear-gradient(#dcdcdc,#a6a6a6)] pl-[3px] pt-[1px] text-[12px] text-[#222] " + cols[i]}>
            {h}
          </div>
        ))}
      </div>
      {rows.map((r, ri) => (
        <div key={ri} className="flex h-[22px]">
          {r.map((v, i) => {
            let bg = "bg-white";
            if (i === 0) bg = "bg-[linear-gradient(#dedede,#8f8f8f)]";
            else if (ri === 0 || i === 1 || i === 3) bg = "bg-[#ecebe9]";
            return (
              <div key={i} className={"flex items-center border-b border-r border-[#a8a8a8] pl-[4px] text-[13px] text-black " + bg + " " + cols[i]}>
                {v}
              </div>
            );
          })}
        </div>
      ))}
    </div>
  );
}

function VarPanel() {
  return (
    <div className="flex flex-1 flex-col bg-white">
      <div className="flex h-[29px] items-center border-t border-[#d0d0d0] bg-[#9b9d9b] pb-[1px] pl-[3px] text-[14px] text-[#4c4c4c]">变量表</div>
      <div className="flex h-[31px] items-center bg-[linear-gradient(#d0d3d8,#9fa4aa)] pl-[5px]">
        <S w={20} h={20}>
          <path d="M1 4h11M1 5.500h11M1 16h11M1 17.500h11" stroke="#e8e8e8" />
          <path d="M1 5.500h11M1 17.500h11" stroke="#808890" />
          <path d="M9 10l6-5v3h5v4h-5v3z" fill="#78b878" />
        </S>
        <S w={20} h={20} className="ml-[8px]">
          <path d="M0 4h12M12 4v13M0 17h12" fill="none" stroke="#eee" strokeWidth="1.500" />
          <path d="M0 5.500h12M0 18h12" stroke="#444" />
          <RedX x={9} y={6} s={10} />
        </S>
        <div className="ml-[6px] h-[20px] w-[2px] border-l border-r border-l-[#666] border-r-[#eee]" />
        <S w={20} h={20} className="ml-[7px]">
          <rect x="1" y="8" width="17" height="11" rx="4" fill="url(#glass)" stroke="#3a70c8" />
          <path d="M6 6h3V1h4v5h3l-5 5z" fill="#48a048" />
        </S>
      </div>
      <VarTable />
    </div>
  );
}

function SidePanel() {
  return (
    <div className="flex w-[200px] shrink-0 flex-col border-l border-[#808080]">
      <div className="flex h-[28px] items-center justify-between bg-[#9b9d9b] pb-[1px] pl-[3px] pr-[5px] text-[14px] text-[#4c4c4c]">
        主要
        <S w={10} h={12}>
          <path d="M2.500 .5h5v6h2v1H.5v-1h2zM5 8v4" fill="#7a7c7a" stroke="#5a5c5a" />
        </S>
      </div>
      <div className="flex h-[30px] items-center bg-[linear-gradient(#d0d3d8,#9fa4aa)]">
        <div className="flex w-[28px] justify-center">{I.winTag}</div>
        <div className="flex w-[28px] justify-center">{I.winGrid}</div>
        <div className="flex w-[29px] justify-center">{I.docGrid}</div>
        <div className="flex w-[28px] justify-center">{I.docColor}</div>
        <div className="flex w-[28px] justify-center">{I.winColor}</div>
        <div className="flex w-[28px] justify-center">{I.monitor}</div>
      </div>
      <div className="flex-1 border-b border-r border-[#a0a0a0] bg-white pt-[2px]">
        {tree.map((row, i) => (
          <TreeRow key={i} row={row} />
        ))}
      </div>
    </div>
  );
}

function StatusBar() {
  const bar = "h-[26px] w-[2px] shrink-0 border-l border-r border-l-[#222] border-r-[#555]";
  return (
    <div className="flex h-[30px] items-center bg-[linear-gradient(#3e4250_0,#3e4250_7px,#2f2f2f_8px)] text-[14px] text-white">
      <div className="w-[265px] shrink-0 pl-[10px] text-[13.500px]">LAD 程序段 1, 行 1, 列 1</div>
      <div className={bar} />
      <div className="w-[41px] shrink-0 pl-[10px] text-[13px]">INS</div>
      <div className={bar} />
      <div className="ml-[7px] h-[18px] w-[18px] shrink-0 rounded-full bg-[#a0a0a0]" />
      <div className="ml-[17px] w-[262px] shrink-0">未连接</div>
      <div className={bar} />
      <div className="w-[52px] shrink-0" />
      <div className={bar} />
      <div className="ml-auto mr-[16px] mt-[7px] text-[#b4b4b4]">CSDN @分～耳</div>
    </div>
  );
}

function TitleBar() {
  return (
    <div className="flex h-[29px] items-start bg-white">
      <div className="ml-[55px] flex h-[26px] w-[117px] items-center rounded-r-[14px] border border-l-0 border-[#b4b8bc] bg-[linear-gradient(#fafafa,#dfe3e8)] pl-[5px]">
        <div className="flex w-[26px] justify-center">
          <S w={15} h={18}><Doc x={0} y={0} w={14} h={17} c="#7a8aa0" /></S>
        </div>
        <div className="flex w-[27px] justify-center"><FolderOpen w={20} h={19} /></div>
        <div className="flex w-[26px] justify-center">
          <S w={19} h={19}>
            <rect x=".5" y=".5" width="18" height="18" rx="1" fill="url(#purple)" stroke="#4038a0" />
            <rect x="3.500" y="1" width="12" height="9" fill="#f4f4f4" />
            <rect x="5" y="13" width="9" height="6" fill="#222" />
            <rect x="10" y="14" width="2" height="4" fill="#ddd" />
          </S>
        </div>
        <div className="flex w-[24px] justify-center">
          <S w={20} h={19}>
            <rect x="4" y="1" width="12" height="7" fill="#fff" stroke="#888" />
            <rect x="1" y="6.500" width="18" height="8" rx="1" fill="url(#gray)" stroke="#666" />
            <rect x="5" y="11.500" width="10" height="7" fill="url(#glass)" stroke="#6a88b0" />
            <circle cx="14.500" cy="4" r="3.500" fill="#30a040" />
            <path d="M12.800 4l1.300 1.500L16.500 2.800" fill="none" stroke="#fff" />
          </S>
        </div>
      </div>
      <S w={8} h={11} className="ml-[11px] mt-[8px]">
        <path d="M0 1h7" stroke="#777" strokeWidth="1.500" />
        <path d="M0 4.500h7L3.500 9z" fill="#555" />
      </S>
      <div className="ml-auto mr-[117px] mt-[3px] whitespace-nowrap font-['Noto_Sans','Noto_Sans_CJK_SC',sans-serif] text-[16px] leading-[20px] text-black">
        项目 1 - STEP 7-Micro/WIN SMART
      </div>
    </div>
  );
}

function MenuTabs() {
  const tabs = ["编辑", "视图", "PLC", "调试", "工具", "帮助"];
  return (
    <div className="flex h-[27px] items-end bg-[#535353] pl-[59px]">
      <div className="flex h-[25px] w-[52px] items-center justify-center rounded-t-[3px] border-x border-t border-[#b8ccd4] bg-[linear-gradient(#f4f8f8,#d2dce0)] text-[14px] text-black">
        文件
      </div>
      <div className="ml-[2px] flex">
        {tabs.map((t) => (
          <div key={t} className={"flex h-[25px] items-center justify-center pt-[1px] text-white " + (t === "PLC" ? "w-[52px] text-[13px]" : "w-[56px] text-[14px]")}>
            {t}
          </div>
        ))}
      </div>
    </div>
  );
}

function AppButton() {
  return (
    <div className="absolute left-[5px] top-[2px] flex h-[47px] w-[47px] items-center justify-center rounded-full border border-[#77797c] bg-[radial-gradient(circle_at_50%_35%,#ffffff,#d8dade_70%,#8a8c90)] shadow-[inset_0_0_0_3px_#eceef0,0_1px_2px_#555]">
      <S w={24} h={26}>
        <rect x="1.500" y=".5" width="21" height="22" fill="#d4e0f4" stroke="#3a64b0" />
        <rect x="2" y="1" width="20" height="2.500" fill="#3a64b0" />
        <Rung x={4} y={5} c="#2a50a0" />
        <path d="M3 15.500h4M8 13v5" stroke="#2a50a0" />
        <rect x="12" y="16" width="11" height="8" fill="#708070" stroke="#445" />
        <rect x="13" y="19" width="9" height="2" fill="#b8e0b0" />
      </S>
    </div>
  );
}

export default function App() {
  return (
    <div className={"relative flex h-[1026px] w-[1234px] flex-col overflow-hidden bg-[#f0f0f0] " + sans}>
      <Defs />
      <TitleBar />
      <MenuTabs />
      <Ribbon />
      <AppButton />
      <div className="flex h-[822px] bg-[#535353] pt-[4px]">
        <SidePanel />
        <div className="ml-[5px] flex flex-1 flex-col">
          <div className="h-[61px] border-b border-[#c8d0ac] bg-[linear-gradient(#d4d7db_0,#a2a7ad_52%,#cfd0d3_100%)]">
            <EditorToolbar />
            <EditorTabs />
          </div>
          <Editor />
          <div className="h-[7px] shrink-0" />
          <VarPanel />
        </div>
      </div>
      <StatusBar />
      <div className="h-[6px] bg-[#f0f0f0]" />
    </div>
  );
}
